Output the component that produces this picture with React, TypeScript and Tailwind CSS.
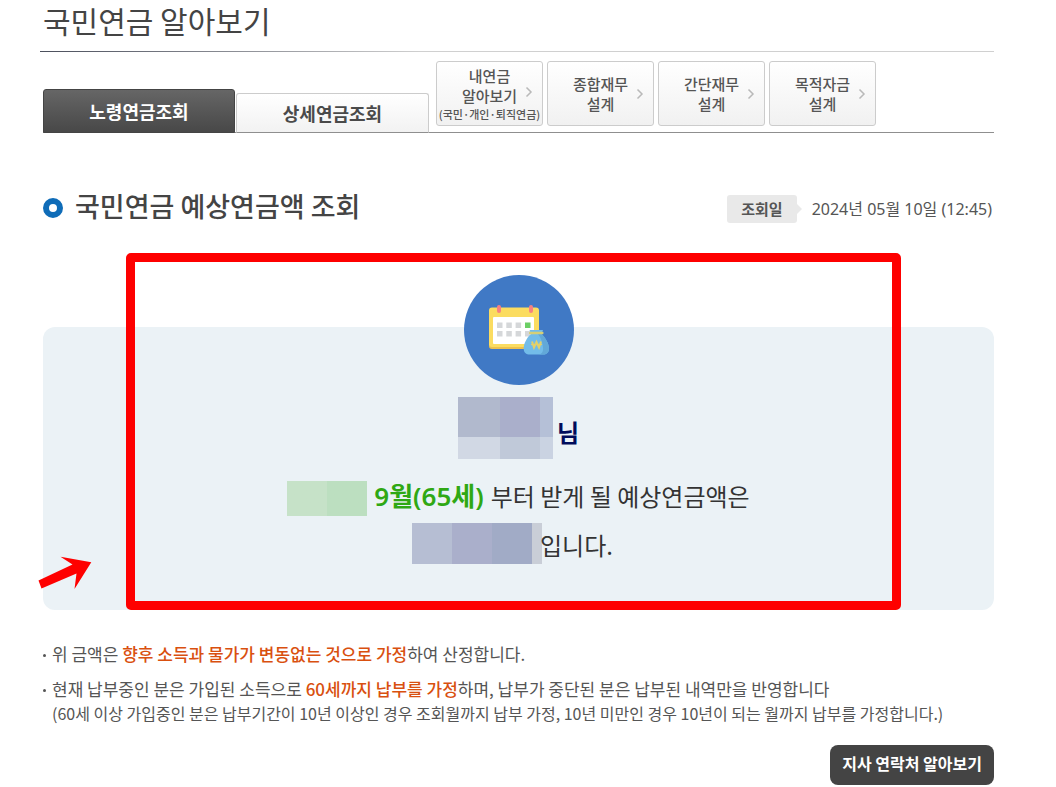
import React from 'react';

const tools = [
  { lines: ['내연금', '알아보기'], note: '(국민·개인·퇴직연금)' },
  { lines: ['종합재무', '설계'] },
  { lines: ['간단재무', '설계'] },
  { lines: ['목적자금', '설계'] },
];

function Chevron() {
  return (
    <svg className="h-3 w-2 shrink-0" viewBox="0 0 8 12" fill="none" stroke="#b9b9b9" strokeWidth="1.5" aria-hidden="true">
      <path d="M1.5 1.5 6 6 1.5 10.5" />
    </svg>
  );
}

function CalendarBadge() {
  return (
    <svg className="size-[110px]" viewBox="0 0 110 110" aria-hidden="true">
      <circle cx="55" cy="55" r="55" fill="#4079c5" />
      <rect x="25" y="32.5" width="50" height="40.5" rx="3" fill="#fbdc60" />
      <path d="M25 70v1a3 3 0 0 0 3 3h40v-2H28a3 3 0 0 1-3-2z" fill="#ecc14e" />
      <rect x="29" y="42" width="41" height="27" rx="1" fill="#fff" />
      <rect x="33" y="30" width="4" height="8" rx="2" fill="#f68181" />
      <rect x="65" y="30" width="4" height="8" rx="2" fill="#f68181" />
      <g fill="#d5d7d9">
        <rect x="33" y="47.5" width="5.5" height="5.5" />
        <rect x="42.3" y="47.5" width="5.5" height="5.5" />
        <rect x="51.6" y="47.5" width="5.5" height="5.5" />
        <rect x="33" y="56" width="5.5" height="5.5" />
        <rect x="42.3" y="56" width="5.5" height="5.5" />
        <rect x="51.6" y="56" width="5.5" height="5.5" />
        <rect x="61" y="56" width="5.5" height="5.5" />
      </g>
      <rect x="61" y="47.5" width="5.5" height="5.5" fill="#6ccf65" />
      <path d="M65.500 55h13.500l-1.500 4c4 3.500 7.500 10 7.500 14.500 0 4-2.500 6-6 6H66c-4 0-6.300-2-6.300-6 0-4.500 3-11 7.300-14.500z" fill="#73bce9" />
      <path d="M74 59h3.500c4 3.500 7.500 10 7.500 14.500 0 4-2.500 6-6 6h-5c4 0 5.500-3 5-7-.5-5-2-10-5-13.500z" fill="#62a8d8" />
      <rect x="65" y="56.800" width="14.500" height="2.400" rx="1" fill="#d6cf76" />
      <path d="M68 66.500 70 72.500l2.500-5.500L75 72.500l2-6" fill="none" stroke="#e3d06b" strokeWidth="2" />
      <path d="M67 69.500h11" fill="none" stroke="#e3d06b" strokeWidth="1.200" />
    </svg>
  );
}

export default function App() {
  return (
    <main className="bg-white pb-0.5 pl-10 pr-[62px] font-['Noto_Sans_CJK_KR',sans-serif] text-[#333]">
      <h1 className="h-[51px] pl-[3px] text-[30px] leading-10 text-[#444]">국민연금 알아보기</h1>
      <div className="h-px bg-linear-to-r from-[#4b4f5c] to-[#d0d0d0] to-40%" />

      <nav className="ml-[3px] mt-[9px] flex items-end border-b border-[#8f8f8f]" aria-label="연금 조회">
        <a href="#old-age" className="-mb-px flex h-11 w-48 items-center justify-center rounded-t-[3px] border border-[#444] bg-linear-to-b from-[#666] to-[#484848] text-lg font-bold leading-6 text-white" aria-current="page">
          노령연금조회
        </a>
        <a href="#detail" className="-mb-px ml-px flex h-10 w-[193px] items-center justify-center rounded-t-[3px] border border-[#ccc] border-b-[#8f8f8f] bg-linear-to-b from-white to-[#f2f2f2] text-lg font-bold leading-6 text-[#4a4a4a]">
          상세연금조회
        </a>
        <div className="mb-1.5 ml-[7px] flex gap-1">
          {tools.map((t) => (
            <a
              key={t.lines[0]}
              href="#tool"
              className="flex h-[65px] w-[107px] flex-col items-center justify-center rounded-[3px] border border-[#ccc] bg-linear-to-b from-white to-[#f1f1f1] text-[15px] font-medium leading-5 text-[#555]"
            >
              <span className={t.note ? 'flex items-end gap-2 pl-4' : 'flex items-center gap-2 pl-4'}>
                <span className="text-center">
                  {t.lines[0]}
                  <br />
                  {t.lines[1]}
                </span>
                <span className={t.note ? 'pb-2' : ''}>
                  <Chevron />
                </span>
              </span>
              {t.note && <span className="whitespace-nowrap text-[11px] leading-4">{t.note}</span>}
            </a>
          ))}
        </div>
      </nav>

      <header className="ml-[3px] mt-[53px] flex items-center justify-between">
        <h2 className="flex items-center gap-3 text-[27px] font-medium leading-10 text-[#444]">
          <span className="mt-1 size-5 rounded-full border-[6px] border-[#0f6cb8]" />
          국민연금 예상연금액 조회
        </h2>
        <p className="mt-1.5 flex items-center pr-0.5 text-[#555]">
          <span className="rounded-[3px] bg-[#e9e9e9] px-3.5 text-[15px] font-bold leading-7">조회일</span>
          <span className="border-y-[5px] border-l-[5px] border-y-transparent border-l-[#e9e9e9]" />
          <time className="ml-2.5 font-['Noto_Sans','Noto_Sans_CJK_KR',sans-serif] text-base leading-6" dateTime="2024-05-10T12:45">
            2024년 05월 10일 (12:45)
          </time>
        </p>
      </header>

      <section className="relative ml-[3px] mt-[27px] pt-[74px]">
        <div className="flex flex-col items-center rounded-xl bg-[#ebf2f6] pb-[46px] text-2xl">
          <div className="-mt-[52px]">
            <CalendarBadge />
          </div>
          <p className="mt-3 flex h-[62px] items-center gap-1 font-bold text-[#000c5c]">
            <span className="grid h-[62px] w-[95px] grid-cols-[42px_40px_13px] grid-rows-[40px_22px]">
              <i className="bg-[#b1b9cd]" />
              <i className="bg-[#aaafcb]" />
              <i className="bg-[#b5c0d7]" />
              <i className="bg-[#d1d8e4]" />
              <i className="bg-[#c0c9d9]" />
              <i className="bg-[#cad3e2]" />
            </span>
            <span className="pt-2">님</span>
          </p>
          <p className="mt-5 flex h-[38px] items-center gap-[7px]">
            <span className="h-[35px] w-20 bg-linear-to-r from-[#c6e2c8] from-50% to-[#bcdfc0] to-50%" />
            <strong className="pb-1 font-['Noto_Sans','Noto_Sans_CJK_KR',sans-serif] text-[26px] leading-9 font-semibold text-[#2fa814]">9월(65세)</strong>
            <span className="pb-1">부터 받게 될 예상연금액은</span>
          </p>
          <p className="mr-3 mt-1.5 flex h-[41px] items-center">
            <span className="grid h-[41px] w-[130px] grid-cols-[40px_40px_40px_10px]">
              <i className="bg-[#b6bed3]" />
              <i className="bg-[#aaafcb]" />
              <i className="bg-[#a1abc6]" />
              <i className="bg-[#c9ced7]" />
            </span>
            <span className="-ml-0.5 pt-0.5">입니다.</span>
          </p>
        </div>
        <div className="pointer-events-none absolute inset-y-0 left-[83px] right-[93px] rounded-[5px] border-[9px] border-[#fe0000]" />
        <svg className="absolute -left-[5px] top-[303px] h-9 w-[54px]" viewBox="0 0 54 36" aria-hidden="true">
          <path d="M.5 24.500 34.500 8.500 22.500.8 53.300 6.300 36.500 33 38.500 17.500 3.500 32.500Z" fill="#fe0000" />
        </svg>
      </section>

      <ul className="ml-[3px] mt-8 text-[17px] leading-6 text-[#555]">
        <li className="flex gap-1.5">
          <span className="mt-3 size-[3px] rounded-full bg-[#555]" />
          <span>
            위 금액은 <strong className="font-medium text-[#d9500f]">향후 소득과 물가가 변동없는 것으로 가정</strong>하여 산정합니다.
          </span>
        </li>
        <li className="mt-[11px] flex gap-1.5">
          <span className="mt-3 size-[3px] rounded-full bg-[#555]" />
          <span>
            현재 납부중인 분은 가입된 소득으로 <strong className="font-medium text-[#d9500f]">60세까지 납부를 가정</strong>하며, 납부가 중단된 분은 납부된 내역만을 반영합니다
            <br />
            <span className="text-base leading-6">
              (60세 이상 가입중인 분은 납부기간이 10년 이상인 경우 조회월까지 납부 가정, 10년 미만인 경우 10년이 되는 월까지 납부를 가정합니다.)
            </span>
          </span>
        </li>
      </ul>
      <div className="mt-5 flex justify-end">
        <button type="button" className="h-10 rounded-lg bg-[#444] px-3 pb-1 text-base font-bold leading-6 text-white">
          지사 연락처 알아보기
        </button>
      </div>
    </main>
  );
}
